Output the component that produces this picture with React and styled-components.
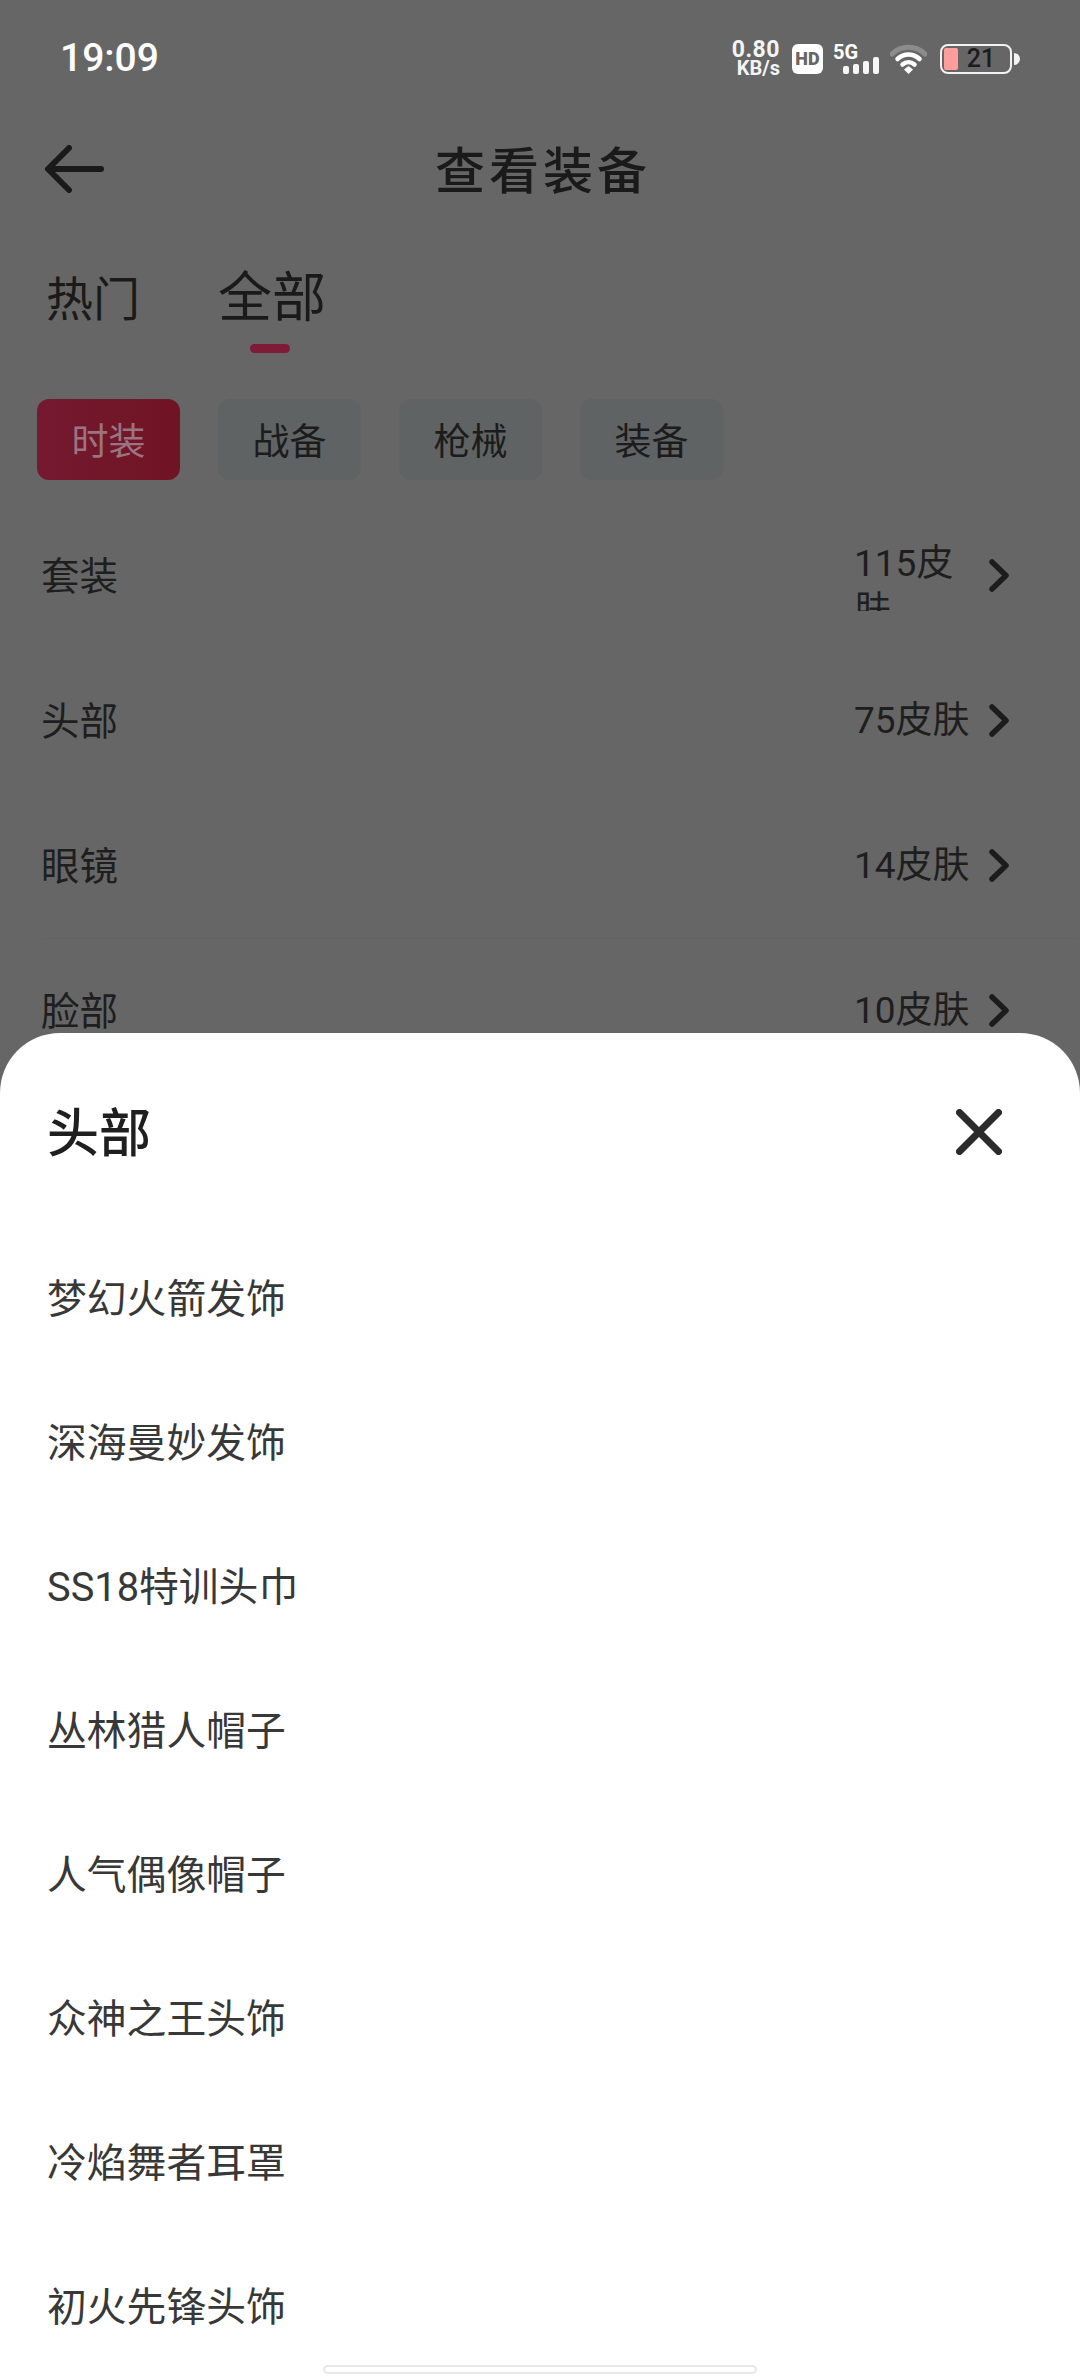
import React from "react";
import styled, { createGlobalStyle } from "styled-components";

const Global = createGlobalStyle`
  * { box-sizing: border-box; }
  html, body { margin: 0; padding: 0; background: #666666; }
  body { font-family: "Noto Sans CJK SC", Roboto, sans-serif; }
`;

const Screen = styled.div`
  position: relative;
  width: 1080px;
  height: 2376px;
  overflow: hidden;
  background: #666666;
  color: #1c1c1c;
  font-family: Roboto, "Noto Sans CJK SC", sans-serif;
`;

const StatusBar = styled.div`
  display: flex;
  align-items: center;
  justify-content: space-between;
  height: 111px;
  padding: 6px 60px 0 60px;
  color: #fff;
`;
const Time = styled.div`
  font: 500 39px/1 Roboto, sans-serif;
`;
const StatusIcons = styled.div`
  display: flex;
  align-items: center;
`;
const Speed = styled.div`
  display: flex;
  flex-direction: column;
  align-items: flex-end;
  width: 50px;
  margin-right: 12px;
  font-family: Roboto, sans-serif;
  font-weight: 700;
  color: #f4f4f4;
`;
const SpeedValue = styled.span`
  font-size: 23px;
  line-height: 19px;
  letter-spacing: 0.5px;
`;
const SpeedUnit = styled.span`
  font-size: 20px;
  line-height: 18px;
`;
const HdBadge = styled.div`
  display: flex;
  align-items: center;
  justify-content: center;
  width: 31px;
  height: 30px;
  margin-right: 10px;
  border-radius: 6px;
  background: #fff;
  color: #666;
  font: 900 18px/1 Roboto, sans-serif;
`;
const Network = styled.div`
  position: relative;
  width: 46px;
  height: 30px;
  margin-right: 11px;
`;
const NetworkLabel = styled.span`
  position: absolute;
  left: 0;
  top: -2px;
  font: 700 20px/20px Roboto, sans-serif;
`;
const NetworkBars = styled.svg`
  position: absolute;
  left: 10px;
  bottom: 0;
`;
const WifiIcon = styled.svg`
  margin-right: 13px;
  display: block;
`;
const Battery = styled.div`
  display: flex;
  align-items: center;
`;
const BatteryBody = styled.div`
  position: relative;
  display: flex;
  align-items: center;
  justify-content: center;
  width: 72px;
  height: 30px;
  border: 2px solid #f2f2f2;
  border-radius: 8px;
  color: #1c1c1c;
  font: 500 25px/1 Roboto, sans-serif;
  padding-left: 10px;
`;
const BatteryFill = styled.i`
  position: absolute;
  left: 2px;
  top: 2px;
  bottom: 2px;
  width: 14px;
  border-radius: 2px;
  background: #ff9d9d;
`;
const BatteryTip = styled.i`
  width: 6px;
  height: 12px;
  margin-left: 2px;
  background: #f2f2f2;
  border-radius: 0 6px 6px 0;
`;

const Header = styled.div`
  position: relative;
  display: flex;
  align-items: center;
  justify-content: center;
  height: 112px;
`;
const BackButton = styled.svg`
  position: absolute;
  left: 44px;
  top: 34px;
`;
const Title = styled.h1`
  margin: 0;
  padding-left: 6px;
  font: 500 50px/1 "Noto Sans CJK SC", sans-serif;
  letter-spacing: 4px;
  color: #1a1a1a;
`;

const Tabs = styled.div`
  display: flex;
  align-items: flex-end;
  gap: 78px;
  height: 70px;
  padding-left: 46px;
  margin-top: 33px;
`;
const Tab = styled.div`
  position: relative;
  font-family: "Noto Sans CJK SC", sans-serif;
  font-size: ${(p) => (p.$active ? 54 : 47)}px;
  line-height: ${(p) => (p.$active ? 64 : 60)}px;
  color: #1a1a1a;
`;
const TabMark = styled.i`
  position: absolute;
  left: 50%;
  bottom: -27px;
  width: 40px;
  height: 9px;
  margin-left: -22px;
  border-radius: 5px;
  background: #7f1a37;
`;

const Chips = styled.div`
  display: flex;
  gap: 38px;
  padding-left: 37px;
  margin-top: 73px;
`;
const Chip = styled.div`
  display: flex;
  align-items: center;
  justify-content: center;
  width: 143px;
  height: 81px;
  border-radius: 12px;
  font: 400 37px/1 "Noto Sans CJK SC", sans-serif;
  background: ${(p) => (p.$active ? "linear-gradient(90deg,#74192f,#701424)" : "#5f6363")};
  color: ${(p) => (p.$active ? "#9a7480" : "#1c1c1c")};
`;

const CategoryList = styled.div`
  margin-top: 23px;
  padding: 0 0 0 41px;
`;
const CategoryRow = styled.div`
  display: flex;
  align-items: center;
  height: 145px;
  padding-right: 71px;
  box-shadow: ${(p) => (p.$divider ? "0 2px 0 -1px #636363" : "none")};
`;
const CategoryName = styled.div`
  flex: 1;
  padding-bottom: 5px;
  font: 400 38.500px/47px "Noto Sans CJK SC", sans-serif;
  color: #1e1e1e;
`;
const CategoryCount = styled.div`
  width: 120px;
  max-height: 71px;
  overflow: hidden;
  font: 400 37px/47px Roboto, "Noto Sans CJK SC", sans-serif;
  color: #1e1e1e;
`;
const Chevron = styled.svg`
  display: block;
  margin-left: 15px;
`;

const Sheet = styled.section`
  position: absolute;
  left: 0;
  right: 0;
  top: 1033px;
  bottom: 0;
  overflow: hidden;
  background: #fff;
  border-radius: 60px 60px 0 0;
`;
const SheetHeader = styled.div`
  display: flex;
  align-items: center;
  justify-content: space-between;
  height: 195px;
  padding: 3px 78px 0 47px;
`;
const SheetTitle = styled.h2`
  margin: 0;
  padding-bottom: 4px;
  font: 500 52px/1 "Noto Sans CJK SC", sans-serif;
  color: #1f1f1f;
`;
const SkinRow = styled.div`
  display: flex;
  align-items: center;
  height: 144px;
  padding-left: 47px;
  font: 400 39.800px/1 Roboto, "Noto Sans CJK SC", sans-serif;
  color: #383838;
`;
const HomeBar = styled.div`
  position: absolute;
  left: 323px;
  bottom: 2px;
  width: 434px;
  height: 9px;
  border: 2px solid #e8e8e8;
  border-radius: 5px;
  background: #fff;
`;

const categories = [
  ["套装", "115皮肤"],
  ["头部", "75皮肤"],
  ["眼镜", "14皮肤"],
  ["脸部", "10皮肤"],
];
const skins = ["梦幻火箭发饰", "深海曼妙发饰", "SS18特训头巾", "丛林猎人帽子", "人气偶像帽子", "众神之王头饰", "冷焰舞者耳罩", "初火先锋头饰"];
const chips = ["时装", "战备", "枪械", "装备"];

export default function App() {
  return (
    <Screen>
      <Global />
      <StatusBar>
        <Time>19:09</Time>
        <StatusIcons>
          <Speed>
            <SpeedValue>0.80</SpeedValue>
            <SpeedUnit>KB/s</SpeedUnit>
          </Speed>
          <HdBadge>HD</HdBadge>
          <Network>
            <NetworkLabel>5G</NetworkLabel>
            <NetworkBars width="36" height="17" viewBox="0 0 36 17" fill="#f6f6f6">
              <rect x="0" y="9" width="6" height="8" rx="2" />
              <rect x="10" y="7" width="6" height="10" rx="2" />
              <rect x="20" y="4" width="6" height="13" rx="2" />
              <rect x="30" y="0" width="6" height="17" rx="2" />
            </NetworkBars>
          </Network>
          <WifiIcon width="37" height="30" viewBox="0 0 37 30" fill="none">
            <path d="M2 10C11 1 26 1 35 10" stroke="#8c8c8c" strokeWidth="5" strokeLinecap="round" />
            <path d="M7.5 15C14 9 23 9 29.5 15" stroke="#fff" strokeWidth="4.5" strokeLinecap="round" />
            <path d="M12.5 20.5C16 17.5 21 17.500 24.5 20.5" stroke="#fff" strokeWidth="4.5" strokeLinecap="round" />
            <path d="M14 25.5L18.5 22l4.500 3.500L18.500 30z" fill="#fff" />
          </WifiIcon>
          <Battery>
            <BatteryBody>
              <BatteryFill />
              21
            </BatteryBody>
            <BatteryTip />
          </Battery>
        </StatusIcons>
      </StatusBar>

      <Header>
        <BackButton width="62" height="48" viewBox="0 0 62 48" fill="none" stroke="#1a1a1a" strokeWidth="6" strokeLinecap="round" strokeLinejoin="round">
          <path d="M25 3L4 24l21 21" />
          <path d="M5 24h52" />
        </BackButton>
        <Title>查看装备</Title>
      </Header>

      <Tabs>
        <Tab>热门</Tab>
        <Tab $active>
          全部
          <TabMark />
        </Tab>
      </Tabs>

      <Chips>
        {chips.map((c, i) => (
          <Chip key={c} $active={i === 0}>{c}</Chip>
        ))}
      </Chips>

      <CategoryList>
        {categories.map(([name, count], i) => (
          <CategoryRow key={name} $divider={i === 2}>
            <CategoryName>{name}</CategoryName>
            <CategoryCount>{count}</CategoryCount>
            <Chevron width="20" height="33" viewBox="0 0 20 33" fill="none" stroke="#1c1c1c" strokeWidth="5.500" strokeLinecap="round" strokeLinejoin="round">
              <path d="M3 3l14 13.500L3 30" />
            </Chevron>
          </CategoryRow>
        ))}
      </CategoryList>

      <Sheet>
        <SheetHeader>
          <SheetTitle>头部</SheetTitle>
          <svg width="46" height="46" viewBox="0 0 46 46" fill="none" stroke="#2b2b2b" strokeWidth="7" strokeLinecap="round">
            <path d="M3.500 3.500l39 39M42.500 3.500l-39 39" />
          </svg>
        </SheetHeader>
        {skins.map((s) => (
          <SkinRow key={s}>{s}</SkinRow>
        ))}
        <HomeBar />
      </Sheet>
    </Screen>
  );
}
